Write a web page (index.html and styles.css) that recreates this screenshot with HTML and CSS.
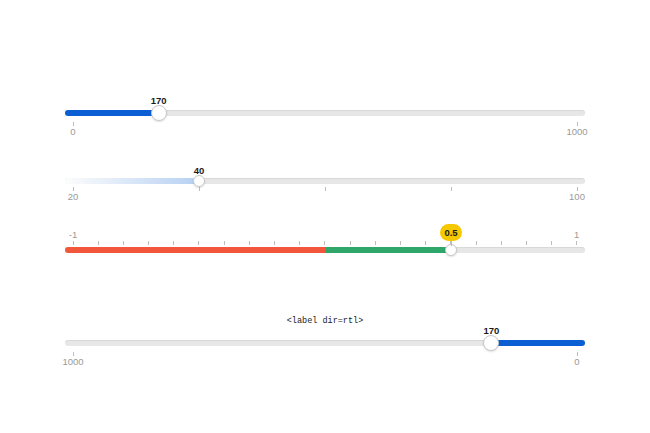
FILE: index.html
```html
<!DOCTYPE html>
<html>
<head>
<meta charset="utf-8">
<link rel="stylesheet" href="styles.css">
</head>
<body>
<div class="page">
  <div class="slider s1" style="--p:0.17">
    <div class="rail">
      <div class="fill blue"></div>
      <div class="thumb big"><span class="val">170</span></div>
    </div>
    <div class="scale">
      <div class="mark"><i></i><span>0</span></div>
      <div class="mark"><i></i><span>1000</span></div>
    </div>
  </div>

  <div class="slider s2" style="--p:0.25">
    <div class="rail">
      <div class="fill soft"></div>
      <div class="thumb small"><span class="val">40</span></div>
    </div>
    <div class="scale">
      <div class="mark"><i></i><span>20</span></div>
      <div class="mark"><i></i><span></span></div>
      <div class="mark"><i></i><span></span></div>
      <div class="mark"><i></i><span></span></div>
      <div class="mark"><i></i><span>100</span></div>
    </div>
  </div>

  <div class="slider s3" style="--p:0.75">
    <div class="scale top">
      <div class="mark"><span>-1</span><i></i></div>
      <div class="mark"><span></span><i></i></div>
      <div class="mark"><span></span><i></i></div>
      <div class="mark"><span></span><i></i></div>
      <div class="mark"><span></span><i></i></div>
      <div class="mark"><span></span><i></i></div>
      <div class="mark"><span></span><i></i></div>
      <div class="mark"><span></span><i></i></div>
      <div class="mark"><span></span><i></i></div>
      <div class="mark"><span></span><i></i></div>
      <div class="mark"><span></span><i></i></div>
      <div class="mark"><span></span><i></i></div>
      <div class="mark"><span></span><i></i></div>
      <div class="mark"><span></span><i></i></div>
      <div class="mark"><span></span><i></i></div>
      <div class="mark"><span></span><i></i></div>
      <div class="mark"><span></span><i></i></div>
      <div class="mark"><span></span><i></i></div>
      <div class="mark"><span></span><i></i></div>
      <div class="mark"><span></span><i></i></div>
      <div class="mark"><span>1</span><i></i></div>
    </div>
    <div class="rail">
      <div class="fill red"></div>
      <div class="fill green"></div>
      <div class="thumb small"><span class="tip">0.5</span></div>
    </div>
  </div>

  <div class="caption">&lt;label dir=rtl&gt;</div>

  <div class="slider s4 rtl" dir="rtl" style="--p:0.17">
    <div class="rail">
      <div class="fill blue"></div>
      <div class="thumb big"><span class="val">170</span></div>
    </div>
    <div class="scale">
      <div class="mark"><i></i><span>0</span></div>
      <div class="mark"><i></i><span>1000</span></div>
    </div>
  </div>
</div>
</body>
</html>
```

FILE: styles.css
```css
html, body {
  margin: 0;
  padding: 0;
  background: #fff;
}
body {
  font-family: "Liberation Sans", Arial, sans-serif;
}
.page {
  width: 520px;
  padding: 0 65px;
  display: flex;
  flex-direction: column;
}
.slider {
  position: relative;
}
.s1 { margin-top: 110px; }
.s2 { margin-top: 41px; }
.s3 { margin-top: 27px; }
.s4 { margin-top: 13px; }

.rail {
  position: relative;
  height: 6px;
  border-radius: 3px;
  background: #e7e7e7;
  box-shadow: inset 0 1px 1px rgba(0,0,0,0.07);
}
.fill {
  position: absolute;
  top: 0;
  bottom: 0;
  inset-inline-start: 0;
  width: calc(8px + (100% - 16px) * var(--p));
  border-radius: 3px 0 0 3px;
}
.rtl .fill { border-radius: 0 3px 3px 0; }
.blue { background: #0b5fd3; }
.soft {
  background: linear-gradient(to right, rgba(255,255,255,0.9), #b6d0f2);
}
.red {
  background: #f2573c;
  width: calc(8px + (100% - 16px) * 0.5);
}
.green {
  background: #2fa76b;
  inset-inline-start: calc(8px + (100% - 16px) * 0.5);
  width: calc((100% - 16px) * 0.25);
  border-radius: 0;
}
.thumb {
  position: absolute;
  top: 50%;
  inset-inline-start: calc(8px + (100% - 16px) * var(--p));
  transform: translate(-50%, -50%);
  box-sizing: border-box;
  border-radius: 50%;
  background: #fff;
  border: 1px solid #c9c9c9;
  box-shadow: 0 1px 2px rgba(0,0,0,0.12);
}
.rtl .thumb { transform: translate(50%, -50%); }
.big { width: 16px; height: 16px; }
.small { width: 12px; height: 12px; }
.val {
  position: absolute;
  bottom: 100%;
  left: 50%;
  transform: translateX(-50%);
  font-size: 9.5px;
  line-height: 11px;
  font-weight: bold;
  color: #1a1a1a;
  white-space: nowrap;
}
.tip {
  position: absolute;
  bottom: calc(100% + 4px);
  left: 50%;
  transform: translateX(-50%);
  width: 22px;
  height: 17px;
  border-radius: 9px;
  background: #f6c800;
  font-size: 9.5px;
  line-height: 17px;
  font-weight: bold;
  color: #1a1a1a;
  text-align: center;
}
.tip::after {
  content: "";
  position: absolute;
  left: 50%;
  top: 100%;
  width: 1px;
  height: 5px;
  margin-left: -0.5px;
  background: #bbb;
}
.scale {
  display: flex;
  justify-content: space-between;
  padding: 0 8px;
}
.mark {
  width: 0;
  display: flex;
  flex-direction: column;
  align-items: center;
}
.mark i {
  display: block;
  width: 1px;
  height: 4px;
  background: #bdbdbd;
  margin-top: 6px;
}
.mark span {
  display: block;
  font-size: 9.5px;
  line-height: 11px;
  height: 11px;
  color: #999;
  white-space: nowrap;
}
.s2 .mark i { margin-top: 3px; }
.s4 .mark span { line-height: 12px; height: 12px; }
.scale.top .mark i { margin-top: 1px; margin-bottom: 2px; }
.caption {
  margin-top: 62px;
  text-align: center;
  font-family: "Liberation Mono", "DejaVu Sans Mono", monospace;
  font-size: 8.5px;
  line-height: 12px;
  color: #222;
}
```
